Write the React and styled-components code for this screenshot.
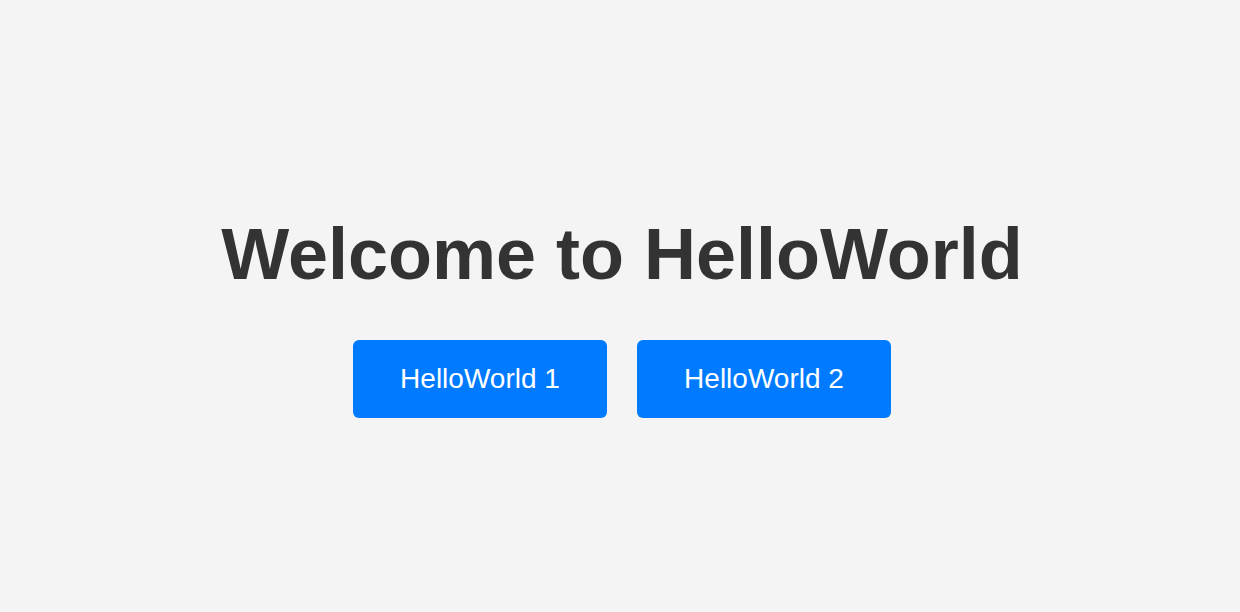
import styled, { createGlobalStyle } from "styled-components";

const GlobalStyle = createGlobalStyle`
  html, body {
    margin: 0;
    padding: 0;
    background: #f4f4f4;
    font-family: "Liberation Sans", Arial, sans-serif;
  }
`;

const Page = styled.main`
  box-sizing: border-box;
  min-height: 100vh;
  padding: 18px 0 0 4px;
  display: flex;
  flex-direction: column;
  align-items: center;
  justify-content: center;
`;

const Title = styled.h1`
  margin: 0 0 45px;
  font-size: 72px;
  font-weight: bold;
  color: #333333;
`;

const Actions = styled.div`
  display: flex;
  gap: 30px;
`;

const Button = styled.button`
  width: 254px;
  height: 78px;
  border: none;
  border-radius: 6px;
  background: #007bff;
  color: white;
  font-family: "Liberation Sans", Arial, sans-serif;
  font-size: 28px;
  cursor: pointer;
  &:hover {
    background: #0069d9;
  }
`;

export default function App() {
  return (
    <>
      <GlobalStyle />
      <Page>
        <Title>Welcome to HelloWorld</Title>
        <Actions>
          <Button>HelloWorld 1</Button>
          <Button>HelloWorld 2</Button>
        </Actions>
      </Page>
    </>
  );
}
